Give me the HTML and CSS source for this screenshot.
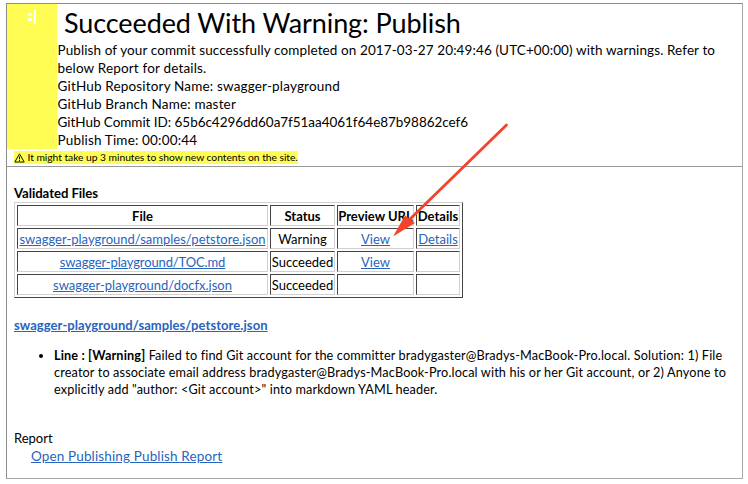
FILE: index.html
```html
<!DOCTYPE html>
<html lang="en">
<head>
<meta charset="utf-8">
<title>Publish Report</title>
<link rel="stylesheet" href="styles.css">
</head>
<body>
<main class="panel">
  <header class="summary">
    <div class="status-strip">
      <svg class="face" width="8" height="14" viewBox="0 0 8 14"><path d="M0 3h3.700v3H0zM0 8.300h3.700v3H0zM5.800 0h2v14h-2z" fill="#fff"/></svg>
    </div>
    <div class="summary-text">
      <h1>Succeeded With Warning: Publish</h1>
      <p class="outcome">Publish of your commit successfully completed on 2017-03-27 20:49:46 (UTC+00:00) with warnings. Refer to</p>
      <p>below Report for details.</p>
      <p>GitHub Repository Name: swagger-playground</p>
      <p>GitHub Branch Name: master</p>
      <p class="commit">GitHub Commit ID: 65b6c4296dd60a7f51aa4061f64e87b98862cef6</p>
      <p>Publish Time: 00:00:44</p>
    </div>
  </header>
  <div class="notice"><span class="notice-mark"><svg width="11" height="10" viewBox="0 0 11 10"><path d="M5.500 .9 10.200 9H.8z" fill="none" stroke="#111" stroke-linejoin="round"/><path d="M5.500 3.500v2.800M5.500 7v1.100" stroke="#111"/></svg><span>It might take up 3 minutes to show new contents on the site.</span></span></div>
  <section class="report">
    <h2>Validated Files</h2>
    <table class="files">
      <colgroup><col class="col-file"><col class="col-status"><col class="col-url"><col class="col-details"></colgroup>
      <tr><th>File</th><th>Status</th><th>Preview URL</th><th>Details</th></tr>
      <tr><td><a>swagger-playground/samples/petstore.json</a></td><td>Warning</td><td><a>View</a></td><td><a>Details</a></td></tr>
      <tr><td><a class="tight">swagger-playground/TOC.md</a></td><td>Succeeded</td><td><a>View</a></td><td></td></tr>
      <tr><td><a>swagger-playground/docfx.json</a></td><td>Succeeded</td><td></td><td></td></tr>
    </table>
    <h3><a>swagger-playground/samples/petstore.json</a></h3>
    <ul>
      <li><b>Line : [Warning]</b> Failed to find Git account for the committer bradygaster@Bradys-MacBook-Pro.local. Solution: 1) File<br>creator to associate email address bradygaster@Bradys-MacBook-Pro.local with his or her Git account, or 2) Anyone to<br>explicitly add "author: &lt;Git account&gt;" into markdown YAML header.</li>
    </ul>
    <p class="report-label">Report</p>
    <p class="report-link"><a>Open Publishing Publish Report</a></p>
  </section>
</main>
<svg class="arrow" width="120" height="120" viewBox="0 0 120 120"><path d="M116.500 4 19 99" stroke="#f5432a" stroke-width="2.800" stroke-linecap="round"/><path d="M3 115.500 15 94.500 25 102z" fill="#f5432a"/></svg>
</body>
</html>
```
FILE: styles.css
```css
body{margin:0;width:748px;height:484px;background:#fff;color:#000;font-family:Lato,sans-serif;font-size:13.5px;overflow:hidden;position:relative;white-space:nowrap}
h1,h2,h3,p,ul{margin:0;padding:0}
.panel{box-sizing:border-box;width:737px;height:476px;margin:3px 0 0 6px;border:1px solid #8c8c8c;border-right-color:#a8a8a8;border-bottom-color:#a8a8a8;overflow:hidden}
.summary{display:flex;height:146px}
.status-strip{width:50px;height:145px;background:#fffd54;box-sizing:border-box;padding:6px 0 0 21px}
.face{display:block}
.summary-text{padding:1px 0 0 .5px;line-height:18px;letter-spacing:.17px}
h1{font-size:27px;font-weight:400;line-height:36px;padding-left:6.5px;letter-spacing:-.1px}
.outcome{letter-spacing:.105px}
.commit{letter-spacing:-.04px}
.notice{height:15px;padding-top:1px;border-bottom:1px solid #999;padding-left:7px;font-size:10.3px;line-height:13px;letter-spacing:-.045px}
.notice-mark{display:flex;width:284px;background:#fffd54;height:13px;align-items:center;gap:2.500px}
.report{padding-left:7px}
h2{font-size:13.2px;line-height:18px;margin-top:17px;letter-spacing:-.07px}
.files{table-layout:fixed;width:449px;border-collapse:separate;border-spacing:2px;border:1px solid;border-color:#d0d0d0 #444 #444 #d0d0d0;font-size:13px}
.files th,.files td{box-sizing:border-box;height:21px;padding:0;border:1px solid;border-color:#444 #d0d0d0 #d0d0d0 #444;text-align:center;line-height:18px}
.col-file{width:251px}
.col-status{width:65px}
.col-url{width:77px}
.col-details{width:44px}
a{color:#2864bd;text-decoration:underline}
.tight{letter-spacing:-.13px}
h3{font-size:13px;line-height:18px;margin-top:18px;letter-spacing:.07px}
ul{padding-left:40px;margin-top:13px;font-size:12.7px;line-height:17px;letter-spacing:.135px}
.report-label{margin-top:31px;line-height:18px;font-size:13px}
.report-link{padding-left:17px;line-height:18px;letter-spacing:.14px}
.arrow{position:absolute;left:390px;top:121px}
```
